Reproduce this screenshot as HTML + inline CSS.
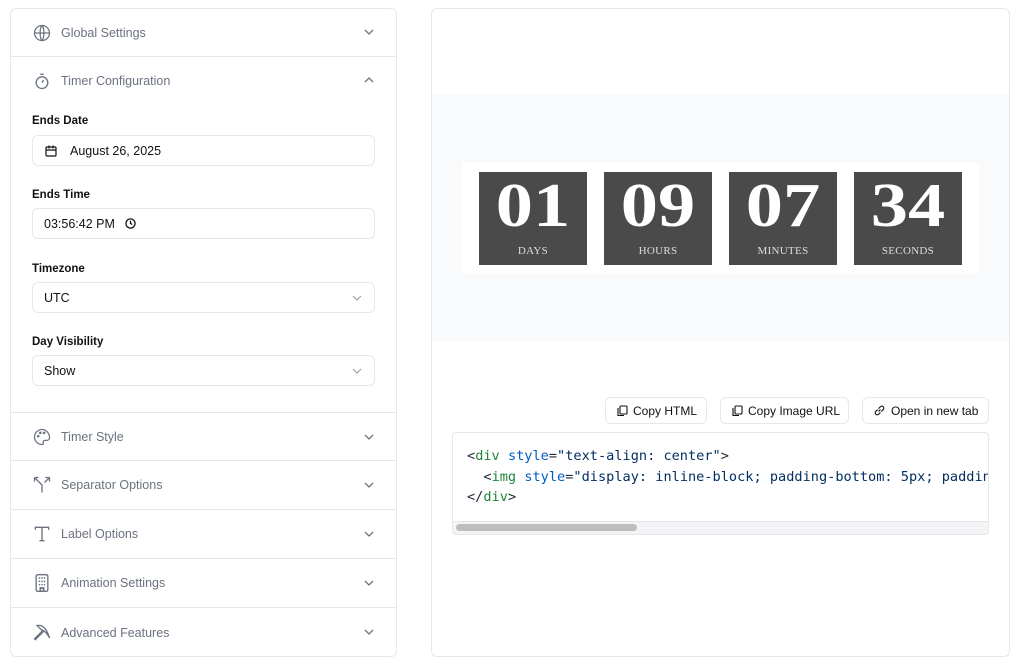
<!DOCTYPE html>
<html><head><style>
*{box-sizing:border-box;margin:0;padding:0}
body{width:1024px;height:670px;background:#fff;font-family:"Liberation Sans",sans-serif;position:relative;overflow:hidden}
.panel{position:absolute;border:1px solid #e5e7eb;border-radius:6px;background:#fff}
.row{position:absolute;left:0;right:0;height:49px;border-bottom:1px solid #e5e7eb;display:flex;align-items:center;padding-left:21px;color:#6b7280;font-size:12.5px}
.row svg.ic{width:20px;height:20px;margin-right:9px}
.chev{position:absolute;right:22px;top:19px}
.lbl{position:absolute;left:21px;font-size:11.5px;font-weight:bold;color:#111}
.inp{position:absolute;left:21px;width:343px;height:31px;border:1px solid #e5e7eb;border-radius:6px;font-size:12.5px;color:#111;display:flex;align-items:center;padding-left:11px}
.tile{position:absolute;top:172px;width:108px;height:93px;background:#4a4a4a;color:#fff;text-align:center;font-family:"Liberation Serif",serif}
.tile .d{font-size:62px;line-height:60px;margin-top:4px;font-weight:bold;transform:scaleX(1.2)}
.tile .l{font-size:11px;margin-top:9px;color:#ddd;letter-spacing:.3px}
.btn{position:absolute;top:397px;height:27px;border:1px solid #e5e7eb;border-radius:6px;font-size:12px;color:#111;display:flex;align-items:center;padding-left:10px}
.btn svg{margin-right:5px}
.code{position:absolute;left:452px;top:432px;width:537px;height:103px;border:1px solid #e5e7eb;border-radius:4px;overflow:hidden;font-family:"DejaVu Sans Mono",monospace;font-size:13.6px;color:#1f2937}
.code pre{position:absolute;left:14px;top:13px;line-height:20.5px;font-family:inherit;white-space:pre}
.t{color:#22863a}.a{color:#005cc5}.s{color:#032f62}
</style></head><body>
<div class="panel" style="left:10px;top:8px;width:387px;height:649px">
 <div class="row" style="top:0;height:48px"><svg class="ic" viewBox="0 0 24 24" fill="none" stroke="#6b7280" stroke-width="1.5"><circle cx="12" cy="12" r="9"/><path d="M3 12h18M12 3c3 3 3 15 0 18M12 3c-3 3-3 15 0 18"/></svg>Global Settings<svg class="chev" width="10" height="10" viewBox="0 0 10 10" style="top:18px"><path d="M1 3l4 4 4-4" fill="none" stroke="#6b7280" stroke-width="1.3"/></svg></div>
 <div class="row" style="top:48px;border:none;height:47px"><svg class="ic" viewBox="0 0 24 24" fill="none" stroke="#6b7280" stroke-width="1.6"><circle cx="12" cy="14" r="7"/><path d="M10 4h4M12 14l2-3"/></svg>Timer Configuration<svg class="chev" width="10" height="10" viewBox="0 0 10 10" style="top:18px"><path d="M1 7l4-4 4 4" fill="none" stroke="#6b7280" stroke-width="1.3"/></svg></div>
 <div class="lbl" style="top:106px">Ends Date</div>
 <div class="inp" style="top:126px"><svg width="14" height="14" viewBox="0 0 14 14" fill="none" stroke="#111" stroke-width="1.2"><rect x="2" y="3" width="10" height="9" rx="1"/><path d="M2 6h10M5 1.5v3M9 1.5v3"/></svg><span style="margin-left:12px">August 26, 2025</span></div>
 <div class="lbl" style="top:180px">Ends Time</div>
 <div class="inp" style="top:199px">03:56:42 PM<svg style="margin-left:10px" width="11" height="11" viewBox="0 0 12 12" fill="none" stroke="#111" stroke-width="1.4"><circle cx="6" cy="6" r="5"/><path d="M6 3v3l2 1"/></svg></div>
 <div class="lbl" style="top:254px">Timezone</div>
 <div class="inp" style="top:273px">UTC<svg style="position:absolute;right:12px" width="10" height="10" viewBox="0 0 10 10"><path d="M1 3l4 4 4-4" fill="none" stroke="#9ca3af" stroke-width="1.2"/></svg></div>
 <div class="lbl" style="top:327px">Day Visibility</div>
 <div class="inp" style="top:346px">Show<svg style="position:absolute;right:12px" width="10" height="10" viewBox="0 0 10 10"><path d="M1 3l4 4 4-4" fill="none" stroke="#9ca3af" stroke-width="1.2"/></svg></div>
 <div class="row" style="top:403px;border-top:1px solid #e5e7eb"><svg class="ic" viewBox="0 0 24 24" fill="none" stroke="#6b7280" stroke-width="1.5"><path d="M12 3a9 9 0 0 0 0 18c1.5 0 2-1 1.5-2-.7-1.5.3-3 2-3H18a3 3 0 0 0 3-3c0-5.5-4-10-9-10z"/><circle cx="7.5" cy="11" r=".8"/><circle cx="10" cy="7" r=".8"/><circle cx="14.5" cy="7" r=".8"/></svg>Timer Style<svg class="chev" width="10" height="10" viewBox="0 0 10 10"><path d="M1 3l4 4 4-4" fill="none" stroke="#6b7280" stroke-width="1.3"/></svg></div>
 <div class="row" style="top:452px"><svg class="ic" viewBox="0 0 24 24" fill="none" stroke="#6b7280" stroke-width="1.6"><path d="M3 3l9 9v9M21 3l-6 6M3 3v5M3 3h5M21 3v5M21 3h-5"/></svg>Separator Options<svg class="chev" width="10" height="10" viewBox="0 0 10 10"><path d="M1 3l4 4 4-4" fill="none" stroke="#6b7280" stroke-width="1.3"/></svg></div>
 <div class="row" style="top:501px"><svg class="ic" viewBox="0 0 24 24" fill="none" stroke="#6b7280" stroke-width="1.6"><path d="M4 7V4h16v3M12 4v16M9 20h6"/></svg>Label Options<svg class="chev" width="10" height="10" viewBox="0 0 10 10"><path d="M1 3l4 4 4-4" fill="none" stroke="#6b7280" stroke-width="1.3"/></svg></div>
 <div class="row" style="top:550px"><svg class="ic" viewBox="0 0 24 24" fill="none" stroke="#6b7280" stroke-width="1.6"><rect x="5" y="2" width="14" height="20" rx="2"/><path d="M10 22v-4h4v4M9 6h0M12 6h0M15 6h0M9 10h0M12 10h0M15 10h0M9 14h0M12 14h0M15 14h0" stroke-linecap="round" stroke-width="2"/></svg>Animation Settings<svg class="chev" width="10" height="10" viewBox="0 0 10 10"><path d="M1 3l4 4 4-4" fill="none" stroke="#6b7280" stroke-width="1.3"/></svg></div>
 <div class="row" style="top:599px;border:none"><svg class="ic" viewBox="0 0 24 24" fill="none" stroke="#6b7280" stroke-width="1.6"><path d="M14 10L4 20l-1-1 10-10M6 3c6-1 11 2 15 15-3-6-6-9-10-10z"/></svg>Advanced Features<svg class="chev" width="10" height="10" viewBox="0 0 10 10"><path d="M1 3l4 4 4-4" fill="none" stroke="#6b7280" stroke-width="1.3"/></svg></div>
</div>
<div class="panel" style="left:431px;top:8px;width:579px;height:649px"></div>
<div style="position:absolute;left:432px;top:95px;width:577px;height:247px;background:#f9fafb"></div>
<div style="position:absolute;left:462px;top:163px;width:517px;height:110px;background:#fff"></div>
<div class="tile" style="left:479px"><div class="d">01</div><div class="l">DAYS</div></div>
<div class="tile" style="left:604px"><div class="d">09</div><div class="l">HOURS</div></div>
<div class="tile" style="left:729px"><div class="d">07</div><div class="l">MINUTES</div></div>
<div class="tile" style="left:854px"><div class="d">34</div><div class="l">SECONDS</div></div>
<div class="btn" style="left:605px;width:102px"><svg width="12" height="12" viewBox="0 0 12 12" fill="none" stroke="#111" stroke-width="1.1"><rect x="4" y="1" width="7" height="8" rx="1"/><path d="M2 3v7.5h6"/></svg>Copy HTML</div>
<div class="btn" style="left:720px;width:129px"><svg width="12" height="12" viewBox="0 0 12 12" fill="none" stroke="#111" stroke-width="1.1"><rect x="4" y="1" width="7" height="8" rx="1"/><path d="M2 3v7.5h6"/></svg>Copy Image URL</div>
<div class="btn" style="left:862px;width:127px"><svg width="13" height="13" viewBox="0 0 14 14" fill="none" stroke="#111" stroke-width="1.2"><path d="M6 8l2-2M5 6L3 8a2 2 0 0 0 3 3l2-2M9 8l2-2a2 2 0 0 0-3-3L6 5"/></svg>Open in new tab</div>
<div class="code"><pre>&lt;<span class="t">div</span> <span class="a">style</span>=<span class="s">"text-align: center"</span>&gt;
  &lt;<span class="t">img</span> <span class="a">style</span>=<span class="s">"display: inline-block; padding-bottom: 5px; padding-top: 5px"</span>
&lt;/<span class="t">div</span>&gt;</pre>
<div style="position:absolute;left:0;right:0;top:88px;height:14px;background:#f3f4f6;border-top:1px solid #e5e7eb"></div>
<div style="position:absolute;left:3px;top:91px;width:181px;height:7px;background:#bdbdbd;border-radius:4px"></div>
</div>
</body></html>
